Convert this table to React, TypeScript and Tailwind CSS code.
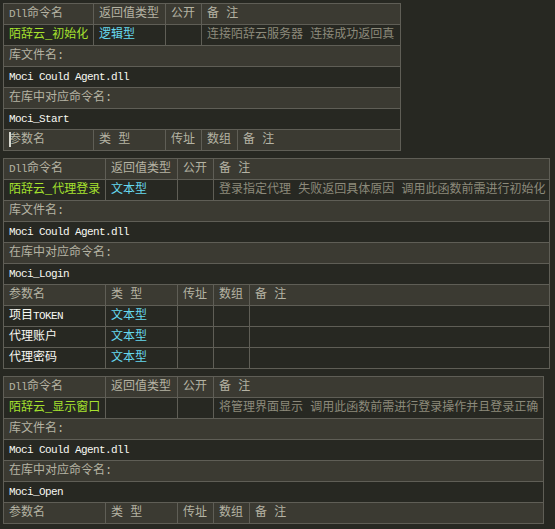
import React from "react";

type Param = { name: React.ReactNode; type: string };

interface TableProps {
  cols: string;
  name: string;
  ret?: string;
  remark: string;
  cmd: string;
  params?: Param[];
  cursor?: boolean;
}

const head = "bg-[#3b3a32] text-[#b5b3a3]";
const dark = "bg-[#272822]";
const cell = "h-[20px] leading-[20px] pl-[5px] whitespace-nowrap overflow-hidden";

function Latin({ children }: { children: React.ReactNode }) {
  return <span className="text-[11px] tracking-[-0.6px]">{children}</span>;
}

function DllTable({ cols, name, ret, remark, cmd, params = [], cursor }: TableProps) {
  return (
    <div className={`grid w-fit gap-px bg-[#5f5e56] p-px ${cols}`}>
      {/* header */}
      <div className={`${cell} ${head} pl-[4px]`}>
        <Latin>Dll</Latin>命令名
      </div>
      <div className={`${cell} ${head}`}>返回值类型</div>
      <div className={`${cell} ${head}`}>公开</div>
      <div className={`${cell} ${head} col-span-2`}>备 注</div>

      {/* command */}
      <div className={`${cell} ${dark} pl-[4px] text-[#a6e22e]`}>{name}</div>
      <div className={`${cell} ${dark} text-[#66d9ef]`}>{ret}</div>
      <div className={`${cell} ${dark}`}></div>
      <div className={`${cell} ${dark} col-span-2 text-[#8c8a7b]`}>{remark}</div>

      <div className={`${cell} ${head} col-span-5 pl-[4px]`}>库文件名:</div>
      <div className={`${cell} ${dark} col-span-5 pl-[4px] text-[#f8f8f2]`}>
        <Latin>Moci Could Agent.dll</Latin>
      </div>
      <div className={`${cell} ${head} col-span-5 pl-[4px]`}>在库中对应命令名:</div>
      <div className={`${cell} ${dark} col-span-5 pl-[4px] text-[#f8f8f2]`}>
        <Latin>{cmd}</Latin>
      </div>

      {/* params header */}
      <div className={`${cell} ${head} pl-[4px] relative`}>
        {cursor && <span className="absolute left-[5px] top-[2px] h-[15px] w-[2px] bg-[#d8d8d0]" />}
        参数名
      </div>
      <div className={`${cell} ${head}`}>类 型</div>
      <div className={`${cell} ${head}`}>传址</div>
      <div className={`${cell} ${head}`}>数组</div>
      <div className={`${cell} ${head}`}>备 注</div>

      {params.map((p, i) => (
        <React.Fragment key={i}>
          <div className={`${cell} ${dark} pl-[4px] text-[#f8f8f2]`}>{p.name}</div>
          <div className={`${cell} ${dark} text-[#66d9ef]`}>{p.type}</div>
          <div className={`${cell} ${dark}`}></div>
          <div className={`${cell} ${dark}`}></div>
          <div className={`${cell} ${dark}`}></div>
        </React.Fragment>
      ))}
    </div>
  );
}

export default function App() {
  return (
    <div className="min-h-screen w-[555px] bg-[#272822] pt-[3px] pl-[3px] flex flex-col gap-[7px] font-['Liberation_Mono','Noto_Sans_CJK_SC',monospace] text-[12px]">
      <DllTable
        cols="grid-cols-[89px_71px_35px_35px_162px]"
        name="陌辞云_初始化"
        ret="逻辑型"
        remark="连接陌辞云服务器 连接成功返回真"
        cmd="Moci_Start"
        cursor
      />
      <DllTable
        cols="grid-cols-[101px_71px_35px_35px_299px]"
        name="陌辞云_代理登录"
        ret="文本型"
        remark="登录指定代理 失败返回具体原因 调用此函数前需进行初始化"
        cmd="Moci_Login"
        params={[
          { name: <>项目<Latin>TOKEN</Latin></>, type: "文本型" },
          { name: "代理账户", type: "文本型" },
          { name: "代理密码", type: "文本型" },
        ]}
      />
      <DllTable
        cols="grid-cols-[101px_71px_35px_35px_293px]"
        name="陌辞云_显示窗口"
        remark="将管理界面显示 调用此函数前需进行登录操作并且登录正确"
        cmd="Moci_Open"
      />
    </div>
  );
}
